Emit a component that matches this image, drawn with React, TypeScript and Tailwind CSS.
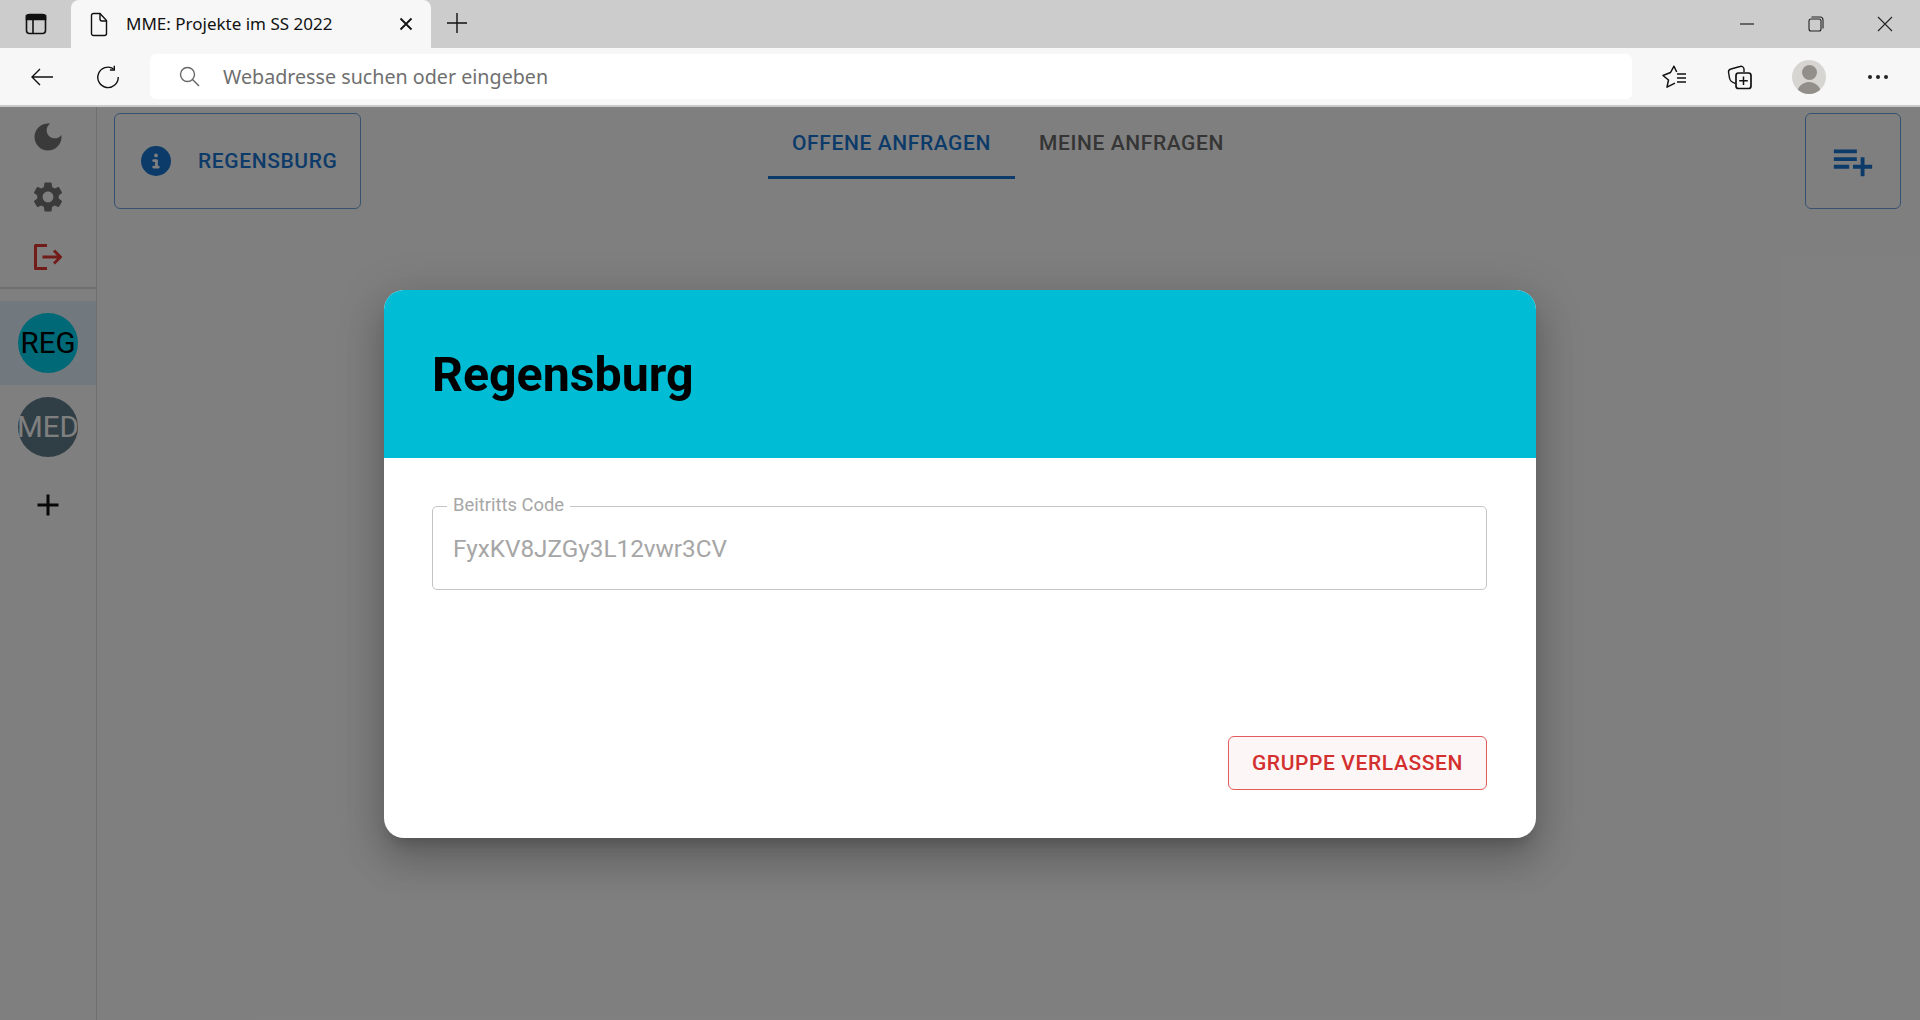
import { FaCircleInfo } from 'react-icons/fa6';

const chromeFont = "font-['Noto_Sans','Open_Sans',sans-serif]";

function BrowserBar() {
  return (
    <div className={`${chromeFont} shrink-0`}>
      {/* tab strip */}
      <div className="flex h-[48px] items-end bg-[#cccccc]">
        <div className="flex h-[48px] w-[71px] items-center justify-center">
          <svg width="24" height="24" viewBox="0 0 24 24" fill="none" stroke="#111" strokeWidth="1.6">
            <rect x="2.5" y="2.5" width="19" height="19" rx="3" />
            <path d="M2.5 3.5h19v4h-19z" fill="#111" />
            <path d="M9 8v13" />
          </svg>
        </div>
        <div className="flex h-[48px] w-[360px] items-center rounded-t-[8px] bg-[#f7f7f7]">
          <svg className="ml-[19px]" width="18" height="25" viewBox="0 0 18 25" fill="none" stroke="#111" strokeWidth="1.4">
            <path d="M3.5 1.5h6.5l6.5 7v13a2 2 0 0 1-2 2h-11a2 2 0 0 1-2-2v-18a2 2 0 0 1 2-2z" />
            <path d="M10 1.5v5.5a2 2 0 0 0 2 2h4.5" />
          </svg>
          <span className="ml-[18px] -mt-[2px] text-[17px] leading-none whitespace-nowrap text-[#111]">MME: Projekte im SS 2022</span>
          <svg className="ml-auto mr-[18px]" width="14" height="14" viewBox="0 0 14 14" stroke="#111" strokeWidth="1.8">
            <path d="M1.5 1.5l11 11M12.5 1.5l-11 11" />
          </svg>
        </div>
        <div className="flex h-[48px] flex-1 items-center">
          <svg className="ml-[15px] -mt-[2px]" width="22" height="22" viewBox="0 0 22 22" stroke="#111" strokeWidth="1.4">
            <path d="M11 1v20M1 11h20" />
          </svg>
          <svg className="ml-auto mr-[52px]" width="18" height="2" viewBox="0 0 18 2" stroke="#222" strokeWidth="1.2">
            <path d="M2 1h14" />
          </svg>
          <svg className="mr-[53px]" width="16" height="16" viewBox="0 0 16 16" fill="none" stroke="#222" strokeWidth="1.1">
            <rect x="1" y="3" width="12" height="12" rx="2" />
            <path d="M3.5 1h8.5a3 3 0 0 1 3 3v8.5" />
          </svg>
          <svg className="mr-[27px]" width="16" height="16" viewBox="0 0 16 16" stroke="#222" strokeWidth="1.1">
            <path d="M1 1l14 14M15 1l-14 14" />
          </svg>
        </div>
      </div>
      {/* address bar */}
      <div className="flex h-[57px] items-center bg-[#f7f7f7]">
        <svg className="ml-[30px]" width="24" height="18" viewBox="0 0 23 18" fill="none" stroke="#111" strokeWidth="1.4">
          <path d="M22.5 9H1.5M9.5 1l-8 8 8 8" />
        </svg>
        <svg className="ml-[42px]" width="24" height="24" viewBox="0 0 24 24" fill="none" stroke="#111" strokeWidth="1.4">
          <path d="M17.5 3.8A10.2 10.2 0 1 0 22.2 12" />
          <path d="M18.3 0.8v4.2h-4.4" />
        </svg>
        <div className="ml-[30px] flex h-[45px] w-[1482px] items-center rounded-[6px] bg-white">
          <svg className="ml-[29px]" width="21" height="21" viewBox="0 0 21 21" fill="none" stroke="#666" strokeWidth="1.4">
            <circle cx="8.5" cy="8.5" r="7" />
            <path d="M13.5 13.5l6.5 6.5" />
          </svg>
          <span className="ml-[23px] text-[19.7px] leading-none text-[#6f6f6f]">Webadresse suchen oder eingeben</span>
        </div>
        <svg className="ml-[30px]" width="26" height="24" viewBox="0 0 26 24" fill="none" stroke="#111" strokeWidth="1.5" strokeLinejoin="round">
          <path d="M14.7 7L12 1.2 8.5 7.5 1 10.5 6.5 15 5 22.2l8-4" />
          <path d="M15 9h9M15 13h9M15 17h9" />
        </svg>
        <svg className="ml-[39px]" width="26" height="26" viewBox="0 0 26 26" fill="none" stroke="#111" strokeWidth="1.4">
          <path d="M8.5 19.5C5 18.5 3 17 2.5 14L1.5 8A3 3 0 0 1 4 5L13 2.5A3 3 0 0 1 17 5V8" />
          <rect x="9" y="9" width="15" height="15.5" rx="2.5" strokeWidth="1.7" />
          <path d="M16.5 12.5v8.5M12.2 16.7h8.6" strokeWidth="1.5" />
        </svg>
        <div className="relative ml-[39px] h-[34px] w-[34px] overflow-hidden rounded-full bg-[#d6d5d1]">
          <div className="absolute left-[10px] top-[5px] h-[15px] w-[15px] rounded-full bg-[#928f8b]" />
          <div className="absolute left-[5px] top-[22px] h-[16px] w-[24px] rounded-t-full bg-[#928f8b]" />
        </div>
        <svg className="ml-[42px]" width="20" height="4" viewBox="0 0 20 4" fill="#222">
          <circle cx="2" cy="2" r="2" />
          <circle cx="10" cy="2" r="2" />
          <circle cx="18" cy="2" r="2" />
        </svg>
      </div>
      <div className="h-[2px] bg-[#c9c9c9]" />
    </div>
  );
}

function Sidebar() {
  return (
    <aside className="flex w-[97px] shrink-0 flex-col border-r border-[#dedede] font-['Roboto',sans-serif]">
      <div className="flex h-[182px] flex-col items-center border-b-2 border-[#dcdcdc] pt-[12px] text-[#757575]">
        <svg width="36" height="36" viewBox="0 0 24 24" fill="currentColor">
          <path d="M12 3c-4.97 0-9 4.03-9 9s4.03 9 9 9 9-4.03 9-9c0-.46-.04-.92-.1-1.36-.98 1.37-2.58 2.26-4.4 2.26-2.98 0-5.4-2.42-5.4-5.4 0-1.81.89-3.42 2.26-4.4-.44-.06-.9-.1-1.36-.1z" />
        </svg>
        <svg className="mt-[24px]" width="36" height="36" viewBox="0 0 24 24" fill="currentColor">
          <path d="M19.14 12.94c.04-.3.06-.61.06-.94 0-.32-.02-.64-.07-.94l2.03-1.58c.18-.14.23-.41.12-.61l-1.92-3.32c-.12-.22-.37-.29-.59-.22l-2.39.96c-.5-.38-1.03-.7-1.62-.94L14.4 2.81c-.04-.24-.24-.41-.48-.41h-3.84c-.24 0-.43.17-.47.41L9.25 5.35c-.59.24-1.13.57-1.62.94l-2.39-.96c-.22-.08-.47 0-.59.22L2.74 8.87c-.12.21-.08.47.12.61l2.03 1.58c-.05.3-.09.63-.09.94s.02.64.07.94l-2.03 1.58c-.18.14-.23.41-.12.61l1.92 3.32c.12.22.37.29.59.22l2.39-.96c.5.38 1.03.7 1.62.94l.36 2.54c.05.24.24.41.48.41h3.84c.24 0 .44-.17.47-.41l.36-2.54c.59-.24 1.13-.56 1.62-.94l2.39.96c.22.08.47 0 .59-.22l1.92-3.32c.12-.22.07-.47-.12-.61l-2.01-1.58zM12 15.6c-1.98 0-3.6-1.62-3.6-3.6s1.62-3.6 3.6-3.6 3.6 1.62 3.6 3.6-1.62 3.6-3.6 3.6z" />
        </svg>
        <svg className="mt-[28px]" width="30" height="28" viewBox="0 0 30 28" fill="none" stroke="#e53935" strokeWidth="3" strokeLinejoin="round">
          <path d="M14 2.5H2.5v23H14" />
          <path d="M9.5 14H27M21 7.5l6.5 6.5-6.5 6.5" />
        </svg>
      </div>
      <div className="mt-[12px] flex h-[84px] items-center justify-center bg-[#e2f3fd]">
        <div className="flex h-[60px] w-[60px] items-center justify-center rounded-full bg-[#00d2ee] text-[29.5px] text-black">REG</div>
      </div>
      <div className="flex h-[84px] items-center justify-center">
        <div className="flex h-[60px] w-[60px] items-center justify-center rounded-full bg-[#607d8b] text-[29.5px] text-white">MED</div>
      </div>
      <svg className="mx-auto mt-[18px]" width="36" height="36" viewBox="0 0 24 24" fill="#111">
        <path d="M19 13h-6v6h-2v-6H5v-2h6V5h2v6h6v2z" />
      </svg>
    </aside>
  );
}

function TopRow() {
  return (
    <div className="grid grid-cols-[1fr_auto_1fr] pl-[17px] pr-[19px] font-['Roboto',sans-serif]">
      <div className="mt-[6px] flex h-[96px] w-[247px] items-center rounded-[6px] border border-[#6aa5e0] text-[#1976d2]">
        <FaCircleInfo className="ml-[26px] text-[30px]" />
        <span className="ml-[27px] pt-[2px] text-[21px] font-medium tracking-[0.6px]">REGENSBURG</span>
      </div>
      <div className="flex h-[72px] items-center">
        <div className="flex h-[72px] w-[247px] items-center justify-center border-b-[3px] border-[#1976d2] pl-[1px] pt-[5px] text-[21px] font-medium tracking-[0.6px] text-[#1976d2]">OFFENE ANFRAGEN</div>
        <div className="flex h-[72px] w-[233px] items-center justify-center pl-[1px] pt-[2px] text-[21px] font-medium tracking-[0.6px] text-[#6b6b6b]">MEINE ANFRAGEN</div>
      </div>
      <div className="mt-[6px] flex h-[96px] w-[96px] items-center justify-center justify-self-end rounded-[6px] border border-[#6aa5e0] text-[#1976d2]">
        <svg width="46" height="46" viewBox="0 0 24 24" fill="currentColor">
          <path d="M14 10H2v2h12v-2zm0-4H2v2h12V6zm4 8v-4h-2v4h-4v2h4v4h2v-4h4v-2h-4zM2 16h8v-2H2v2z" />
        </svg>
      </div>
    </div>
  );
}

function GroupModal() {
  return (
    <div className="w-[1152px] overflow-hidden rounded-[20px] bg-white font-['Roboto',sans-serif] shadow-[0_11px_15px_-7px_rgba(0,0,0,0.2),0_24px_38px_3px_rgba(0,0,0,0.14),0_9px_46px_8px_rgba(0,0,0,0.12)]">
      <div className="flex h-[168px] items-center bg-[#00bcd4] px-[48px] pt-[3px]">
        <h2 className="text-[48.3px] font-bold leading-none text-black">Regensburg</h2>
      </div>
      <div className="py-[48px] pl-[48px] pr-[49px]">
        <div className="relative flex h-[84px] items-center rounded-[5px] border border-[#c4c4c4] px-[20px] pt-[3px] text-[24.3px] text-[#a6a6a6]">
          <span className="absolute -top-[12px] left-[14px] bg-white px-[6px] text-[18.4px] leading-[20px] text-[#a6a6a6]">Beitritts Code</span>
          FyxKV8JZGy3L12vwr3CV
        </div>
        <div className="mt-[146px] flex justify-end">
          <button className="h-[54px] w-[259px] rounded-[6px] border border-[#e25c5c] bg-[#fdf6f6] pt-[2px] text-[21px] font-medium tracking-[0.6px] text-[#d32f2f]">GRUPPE VERLASSEN</button>
        </div>
      </div>
    </div>
  );
}

export default function App() {
  return (
    <div className="flex h-screen flex-col overflow-hidden bg-white">
      <BrowserBar />
      <div className="relative flex min-h-0 flex-1">
        <Sidebar />
        <main className="min-w-0 flex-1">
          <TopRow />
        </main>
        {/* dialog backdrop */}
        <div className="absolute inset-0 flex items-center justify-center bg-black/50">
          <GroupModal />
        </div>
      </div>
    </div>
  );
}
